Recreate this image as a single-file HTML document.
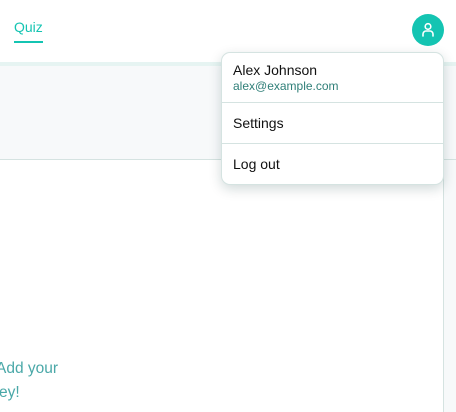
<!DOCTYPE html>
<html><head><style>
body{margin:0;width:456px;height:412px;overflow:hidden;background:#fff;font-family:"Liberation Sans",sans-serif;position:relative}
.a{position:absolute}
</style></head><body>
<div class="a" style="left:0;top:0;width:456px;height:62px;background:#fff"></div>
<div class="a" style="left:14px;top:19px;font-size:14px;color:#14c4b2">Quiz</div>
<div class="a" style="left:14px;top:41px;width:29px;height:2px;background:#14c4b2"></div>
<div class="a" style="left:412px;top:14px;width:32px;height:32px;border-radius:50%;background:#14c4b2"></div>
<svg class="a" style="left:418px;top:20px" width="20" height="20" viewBox="0 0 20 20" fill="none" stroke="#fff" stroke-width="1.6" stroke-linecap="round"><circle cx="10" cy="6.5" r="2.8"/><path d="M5 16v-2a3 3 0 0 1 3-3h4a3 3 0 0 1 3 3v2"/></svg>
<div class="a" style="left:0;top:62px;width:456px;height:4px;background:#e6f4f2"></div>
<div class="a" style="left:0;top:66px;width:456px;height:93px;background:#f7f9fa;border-bottom:1px solid #d5e3e1"></div>
<div class="a" style="left:443px;top:160px;width:1px;height:252px;background:#d5e3e1"></div>
<div class="a" style="left:444px;top:160px;width:12px;height:252px;background:#f7f9fa"></div>
<div class="a" style="left:-4px;top:357px;font-size:15.5px;color:#4aa8a8;line-height:24px">Add your</div>
<div class="a" style="left:-1px;top:381px;font-size:15.5px;color:#4aa8a8;line-height:24px">ey!</div>
<div class="a" style="left:221px;top:52px;width:221px;height:131px;background:#fff;border:1px solid #d5e3e1;border-radius:9px;box-shadow:0 4px 12px rgba(0,50,50,.18)">
<div style="padding:9px 11px 0;height:40px;border-bottom:1px solid #d5e3e1"><div style="font-size:14px;color:#111">Alex Johnson</div><div style="font-size:12px;color:#2f7f78;margin-top:1px">alex@example.com</div></div>
<div style="height:40px;border-bottom:1px solid #d5e3e1;font-size:14px;color:#111;padding-left:11px;line-height:40px">Settings</div>
<div style="height:40px;font-size:14px;color:#111;padding-left:11px;line-height:40px">Log out</div>
</div>
</body></html>
